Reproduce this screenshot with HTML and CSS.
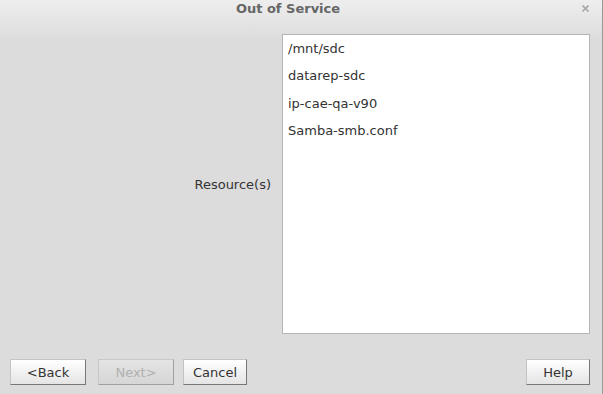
FILE: index.html
```html
<!DOCTYPE html>
<html lang="en">
<head>
    <meta charset="UTF-8">
    <meta name="viewport" content="width=device-width, initial-scale=1.0">
    <title>Out of Service</title>
    <link rel="stylesheet" href="styles.css">
</head>
<body>
    <div class="window">
        <div class="titlebar">
            <div class="title">Out of Service</div>
            <div class="close">
                <svg width="7" height="7" viewBox="0 0 7 7">
                    <path d="M0.5 0.5 L6.5 6.5 M6.5 0.5 L0.5 6.5" stroke="#a8a8a8" stroke-width="1.6"/>
                </svg>
            </div>
        </div>

        <div class="main">
            <div class="label">Resource(s)</div>
            <div class="list">
                <div class="item">/mnt/sdc</div>
                <div class="item">datarep-sdc</div>
                <div class="item">ip-cae-qa-v90</div>
                <div class="item">Samba-smb.conf</div>
            </div>
        </div>

        <div class="buttons">
            <button class="btn wide">&lt;Back</button>
            <button class="btn wide next" disabled>Next&gt;</button>
            <button class="btn cancel">Cancel</button>
            <div class="spacer"></div>
            <button class="btn">Help</button>
        </div>
    </div>
</body>
</html>
```

FILE: styles.css
```css
body {
    margin: 0;
    font-family: "DejaVu Sans", Verdana, sans-serif;
    font-size: 13px;
    color: #333;
    background: #dcdcdc;
}
.window {
    width: 603px;
    height: 394px;
    box-sizing: border-box;
    border-right: 1px solid #999;
    background: linear-gradient(#eeeeee 0, #dcdcdc 40px);
    display: flex;
    flex-direction: column;
}
.titlebar {
    display: flex;
    height: 24px;
}
.title {
    width: 576px;
    text-align: center;
    font-weight: bold;
    line-height: 18px;
    color: #666;
}
.close {
    padding: 5px 0 0 6px;
}
.close svg {
    display: block;
}
.main {
    display: flex;
    height: 300px;
    margin-top: 10px;
}
.label {
    width: 282px;
    box-sizing: border-box;
    padding-right: 11px;
    text-align: right;
    align-self: center;
    padding-top: 1px;
}
.list {
    width: 308px;
    box-sizing: border-box;
    background: #fff;
    border: 1px solid #b4b4b4;
}
.item {
    height: 27.4px;
    line-height: 27.4px;
    padding-left: 5px;
}
.buttons {
    display: flex;
    margin-top: 25px;
    padding: 0 12px 0 10px;
}
.btn {
    width: 64px;
    height: 26px;
    padding: 0;
    font-family: inherit;
    font-size: 13px;
    color: #333;
    background: linear-gradient(#ffffff, #e4e4e4);
    border: 1px solid #c4c4c4;
    border-right-color: #777;
    border-bottom-color: #777;
}
.wide {
    width: 76px;
}
.next {
    margin-left: 12px;
    color: #b0b0b0;
    background: linear-gradient(#e4e4e4, #d6d6d6);
    border-color: #c8c8c8 #a0a0a0 #a0a0a0 #c8c8c8;
}
.cancel {
    margin-left: 9px;
}
.spacer {
    flex: 1;
}
```
